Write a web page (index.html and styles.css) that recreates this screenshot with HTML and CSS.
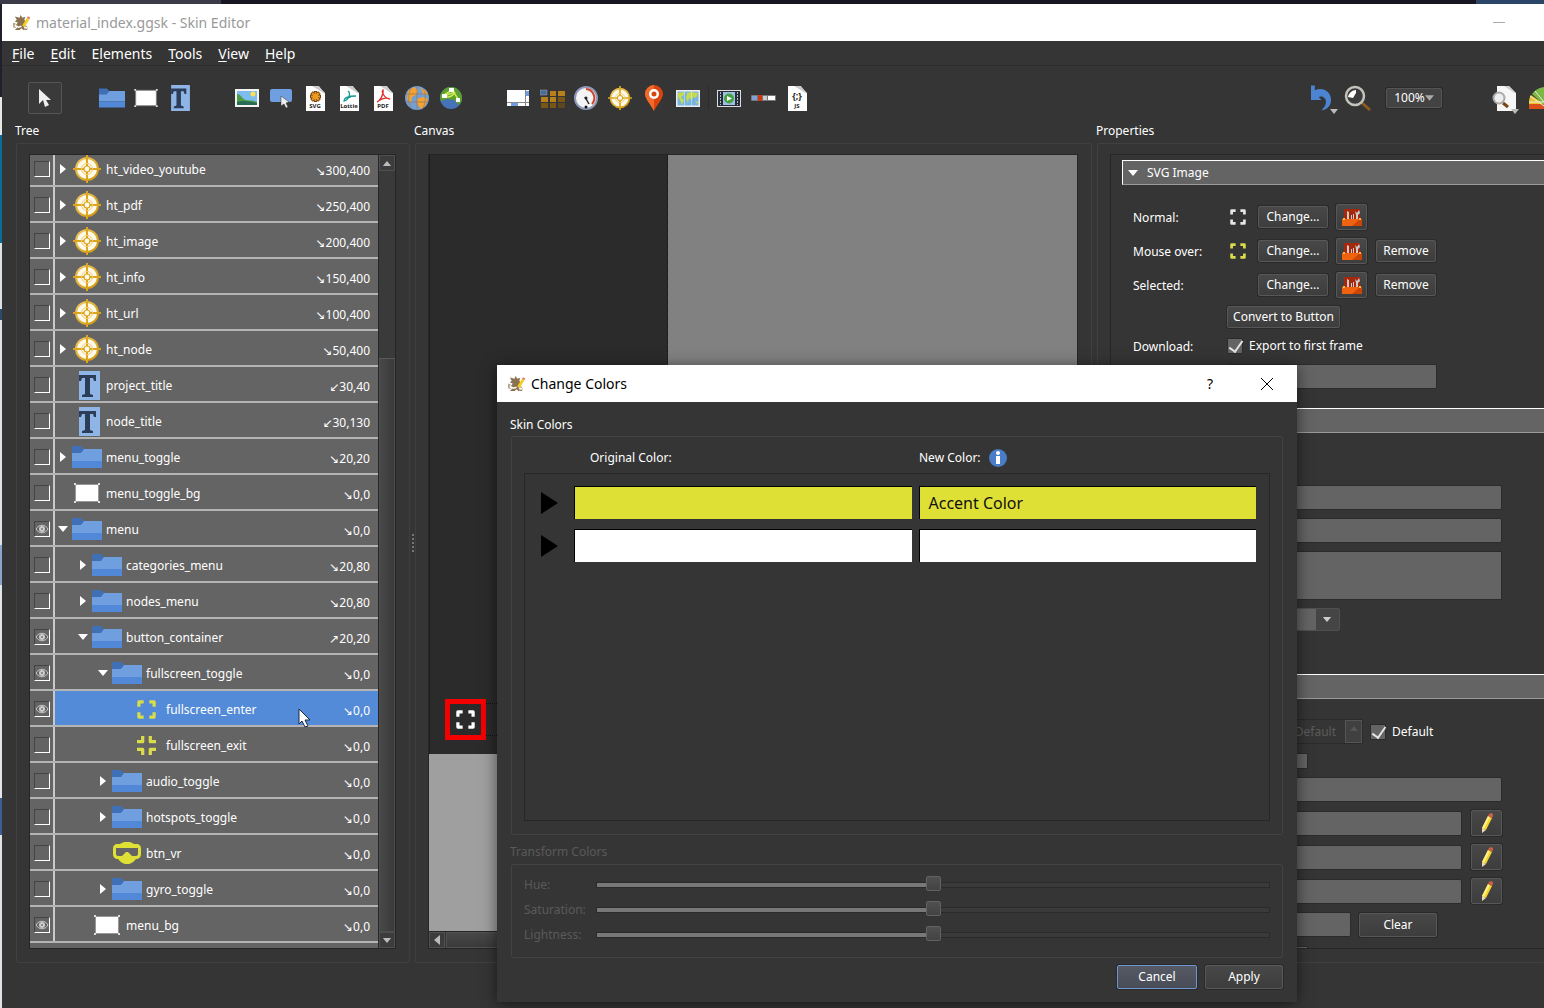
FILE: index.html
```html
<!DOCTYPE html>
<html lang="en">
<head>
<meta charset="utf-8">
<title>material_index.ggsk - Skin Editor</title>
<link rel="stylesheet" href="styles.css">
</head>
<body>
<svg class="defs" aria-hidden="true">
  <defs>
    <linearGradient id="gold" x1="0" y1="0" x2="1" y2="1"><stop offset="0" stop-color="#ecc660"/><stop offset="1" stop-color="#cf9708"/></linearGradient>
    <symbol id="i-logo" viewBox="0 0 20 18"><path fill="#8a7150" d="M4 3l4 1 1-3 2 3 3-1-1 3 2 3-2 3 1 3 2 1v1h-4l-2-2-2 2H3l3-3-2-2 2-3-3-1 2-2-2-3z"/><path fill="#b9a98c" d="M1 9l3 1-1 3 2 2-4-1zM12 13l3-1 2 3-4 2z"/><path stroke="#fff" stroke-width="1.500" fill="none" d="M3 12l4 2 3-1M13 14l3 1"/><path stroke="#f3cf1c" stroke-width="3" d="M17 5l-5 8"/><path stroke="#e08060" stroke-width="3" d="M18 3l-1 2"/></symbol>
    <symbol id="i-pointer" viewBox="0 0 14 20"><path fill="#eee" d="M1 1v15l4-4 2 7 4-2-3-5h5z"/></symbol>
    <symbol id="i-folder" viewBox="0 0 30 22"><path fill="#3f6fb5" d="M0 0h9l3 3v5H0z"/><path fill="#709fdf" d="M0 7h9l3-4h18v12H0z"/><path fill="#5189d8" d="M0 15h30v7H0z"/></symbol>
    <symbol id="i-rect" viewBox="0 0 26 20"><path fill="none" stroke="#999" d="M1.500 1.500h23v17h-23z"/><path fill="#fff" d="M2 2h22v16H2z"/><path fill="#ddd" d="M0 0h2v2H0zM24 0h2v2h-2zM0 18h2v2H0zM24 18h2v2h-2z"/></symbol>
    <symbol id="i-text" viewBox="0 0 21 29"><path fill="#8fb4e6" d="M0 0h21v29H0z"/><path fill="#2b3d59" d="M0 4h17v6h-2l-1-3h-3v16l3 1v2H3v-2l3-1V7H3l-1 3H0z"/></symbol>
    <symbol id="i-image" viewBox="0 0 24 18"><path fill="#f3f3f3" d="M0 0h24v18H0z"/><path fill="#7dbdee" d="M2 2h20v14H2z"/><circle cx="18" cy="5" r="2.500" fill="#ffe34a"/><path fill="#4f9b45" d="M2 5c4 0 5 5 9 6s7 0 11 2v3H2z"/><path fill="#286a55" d="M2 13c6-2 12-1 20 1v2H2z"/></symbol>
    <symbol id="i-button" viewBox="0 0 22 20"><rect width="22" height="13" rx="2" y="1" fill="#6f9fe0"/><path fill="#eee" stroke="#333" stroke-width=".5" d="M11 8v10l3-2 2 4 2-1-2-4 3-1z"/></symbol>
    <symbol id="i-page" viewBox="0 0 19 25"><path fill="#fff" d="M0 0h12l7 7v18H0z"/><path fill="#ccc" d="M6 0h7l6 8z"/></symbol>
    <symbol id="i-svg" viewBox="0 0 19 25"><use href="#i-page"/><g stroke="#704010" stroke-width="3.400"><path d="M9.500 5v11M4 10.500h11M5.500 6.500l8 8M13.500 6.500l-8 8"/></g><g stroke="#e99b25" stroke-width="1.800"><path d="M9.500 6v9M5 10.500h9M6 7l7 7M13 7l-7 7"/></g></symbol>
    <symbol id="i-lottie" viewBox="0 0 19 25"><use href="#i-page"/><path fill="none" stroke="#159b93" stroke-width="1.300" d="M8 5c3 2 1 9-4 10 0-4 6-5 12-5M5 12l6-1"/></symbol>
    <symbol id="i-pdf" viewBox="0 0 19 25"><use href="#i-page"/><path fill="none" stroke="#e02e26" stroke-width="1.300" d="M3 16c3-1 7-8 6-12-2 2 2 9 7 9-4-2-9 0-13 3z"/></symbol>
    <symbol id="i-globe" viewBox="0 0 24 24"><circle cx="12" cy="12" r="12" fill="#739fd2"/><path fill="#f4a233" d="M3 5l6-4 4 3-2 5-4 2-1 6-4-4zM12 13l6-2 5 2-3 7-4 3-4-5zM16 2l5 3 2 4-5-1z"/><path fill="none" stroke="#93785c" stroke-width=".7" d="M1 8h22M1 16h22M12 0v24M6 2c-3 6-3 14 0 20M18 2c3 6 3 14 0 20"/></symbol>
    <symbol id="i-maps" viewBox="0 0 22 22"><circle cx="11" cy="11" r="11" fill="#4672b8"/><path fill="#5ba02e" d="M0 11a11 11 0 0 1 22 0c0 3-1 5-3 7l-5-5-7-1-6 2z"/><path fill="none" stroke="#cdea54" stroke-width="1.500" d="M4 8l8-5M4 9l11-4M13 4l5 8M4 9c4 2 8 1 11-4"/><path fill="#fff" d="M2 7h5v4H2zM9 1h5v4H9zM16 11h4v4h-4z"/></symbol>
    <symbol id="i-container" viewBox="0 0 22 16"><path fill="#fff" d="M0 0h22v16H0z"/><path fill="none" stroke="#888" d="M0 12.500h22M18.500 0v16"/><path fill="#6f9fe0" d="M4 13h7v3H4zM19 1h3v5h-3z"/></symbol>
    <symbol id="i-grid" viewBox="0 0 25 19"><path fill="#b7801b" d="M10 2h6v5h-6zM18 2h7v5h-7zM1 8h7v5H1zM10 8h6v5h-6z"/><path fill="#795618" d="M18 8h7v5h-7zM1 14h7v5H1zM10 14h6v5h-6z"/><path fill="#5e4720" d="M18 14h7v5h-7z"/><path fill="#4a6c9b" stroke="#aaa" stroke-width=".5" d="M0 1h7v5H0z"/></symbol>
    <symbol id="i-gauge" viewBox="0 0 24 24"><circle cx="12" cy="12" r="11" fill="#f4f4f4" stroke="#8d99b7" stroke-width="2"/><path fill="none" stroke="#d1442b" stroke-width="2" d="M12 3a9 9 0 0 1 6 15"/><path stroke="#222" stroke-width="1.500" d="M11 11l4 7"/><circle cx="12" cy="12" r="1.500" fill="#222"/><circle cx="12" cy="21" r="1.500" fill="#111"/></symbol>
    <symbol id="i-target" viewBox="0 0 28 28"><circle cx="14" cy="14" r="11" fill="#fff9ea" stroke="url(#gold)" stroke-width="2"/><path d="M13 0h2v11h-2zM13 17h2v11h-2zM0 13h11v2H0zM17 13h11v2H17z" fill="#dba51c"/><circle cx="14" cy="14" r="5.500" fill="none" stroke="#edcb70"/><circle cx="14" cy="14" r="3" fill="#fffaf0" stroke="#dba51c" stroke-width="1.200"/></symbol>
    <symbol id="i-pin" viewBox="0 0 18 26"><path fill="#d9440e" d="M9 0a9 9 0 0 1 9 9c0 5-7 12-9 17C7 21 0 14 0 9a9 9 0 0 1 9-9z"/><path fill="#f06a2b" d="M9 0v26C7 21 0 14 0 9a9 9 0 0 1 9-9z"/><circle cx="9" cy="9" r="5" fill="#fff"/><circle cx="9" cy="9" r="2.500" fill="#d9440e"/></symbol>
    <symbol id="i-map" viewBox="0 0 24 17"><path fill="#eee" d="M0 0h24v17H0z"/><path fill="#76b4e4" d="M1.500 1.500h21v14h-21z"/><path fill="#c7d94d" d="M2 3l7-1-2 4-2 1 3 3-2 5-2-5-2-3zM11 3l4-1 7 1-2 5-3-1-1 3-3-2-1 5-2-5zM19 11l3 1-1 2z"/><path stroke="#dff0ff" stroke-width=".5" d="M8.500 1v15M15.500 1v15"/></symbol>
    <symbol id="i-film" viewBox="0 0 24 17"><path fill="#ddd" d="M0 0h24v17H0z"/><path fill="#252d3d" d="M1 1h22v15H1z"/><path fill="#9ec0e2" d="M6 2h12v13H6z"/><path stroke="#bbb" stroke-width="1" stroke-dasharray="2 1" d="M3.500 2v13M20.500 2v13"/><circle cx="12" cy="8.500" r="5" fill="#47a044"/><path fill="#fff" d="M10 6l5 2.500-5 2.500z"/></symbol>
    <symbol id="i-seek" viewBox="0 0 25 6"><rect width="25" height="6" rx="1" fill="#777"/><path fill="#7da2d8" d="M1 1h5v4H1z"/><path fill="#ccc" d="M12 1h4v4h-4z"/><path fill="#fff" d="M17 1h7v4h-7z"/><path fill="#cc3711" d="M7 0h4v6H7z"/></symbol>
    <symbol id="i-undo" viewBox="0 0 22 26"><path fill="#4d84d1" d="M0 0h4v5c8-4 17 1 17 10 0 6-4 10-10 11 5-5 6-10 3-13-2-2-4-2-6-1l3 3-11 0z"/></symbol>
    <symbol id="i-zoom" viewBox="0 0 27 27"><path stroke="#8c5b1e" stroke-width="3" d="M17 17l9 8"/><circle cx="11" cy="11" r="9" fill="#3b3b3b" stroke="#c5c3bb" stroke-width="2.500"/><path fill="#fff" d="M12 5c-4 0-7 3-8 7l5 1 3-5z"/></symbol>
    <symbol id="i-preview" viewBox="0 0 24 25"><path fill="#f7f7f7" d="M5 0h12l7 7v18H5z"/><path fill="#ccc" d="M12 0h5l7 8z"/><path stroke="#794418" stroke-width="3" d="M11 17l5 4"/><circle cx="7" cy="12" r="5.500" fill="#eee" stroke="#aaa" stroke-width="2"/></symbol>
    <symbol id="i-palette" viewBox="0 0 15 22"><path fill="#d9501a" d="M0 15h15v7H0z"/><path fill="#edc42d" d="M2 8l13 9H0c0-3 0-6 2-9z"/><path fill="#7bb944" d="M3 7c2-3 6-6 12-7v18z"/><path fill="none" stroke="#e8efe0" d="M1 9l14 10M6 4l9 11M0 15h15"/></symbol>
    <symbol id="i-fs" viewBox="0 0 20 20"><path fill="none" stroke="currentColor" stroke-width="3.400" stroke-linejoin="round" d="M2 7V2h5M13 2h5v5M18 13v5h-5M7 18H2v-5"/></symbol>
    <symbol id="i-fsx" viewBox="0 0 20 20"><path fill="none" stroke="currentColor" stroke-width="3.400" stroke-linejoin="round" d="M0 6h6V0M14 0v6h6M20 14h-6v6M6 20v-6H0"/></symbol>
    <symbol id="i-vr" viewBox="0 0 28 22"><path fill="#dfe036" fill-rule="evenodd" d="M7 2c4-3 10-3 14 0h3c2 0 4 2 4 4v6c0 3-2 5-5 5-5 7-13 7-18 0-3 0-5-2-5-5V6c0-2 2-4 4-4zM3 6v6c0 1 1 2 2 2h4l4-4h2l4 4h4c1 0 2-1 2-2V6z"/></symbol>
    <symbol id="i-tools" viewBox="0 0 20 17"><path fill="#a3280c" d="M2 0h16v13H2z"/><path fill="#ccc" d="M5 2l2 1v7H5zM9 6h1v4H9zM11 5h1v5h-1zM13 2l2 2 2-3 1 3-2 2v4h-2V6z"/><path fill="#ef6210" d="M0 10h20v7H0z"/><path fill="#c94608" d="M10 17l8-7h2v7z"/><path fill="#ffb648" d="M1 9h2v2H1zM17 9h2v2h-2z"/></symbol>
    <symbol id="i-pencil" viewBox="0 0 12 20"><path fill="#f5d327" d="M7 3l4 2-6 12-4-2z"/><path fill="#fff08a" d="M7 3l2 1-6 12-2-1z"/><path fill="#c76245" d="M8 1l2-1 2 1v2l-1 2-4-2z"/><path fill="#ecdab7" d="M1 15l4 2-4 3z"/></symbol>
    <symbol id="i-eye" viewBox="0 0 14 12"><path fill="none" stroke="#ccc" d="M1 6c3-5 9-5 12 0-3 5-9 5-12 0z"/><circle cx="7" cy="6" r="3" fill="#ccc"/><circle cx="7" cy="6" r="1" fill="#777"/></symbol>
    <symbol id="i-right" viewBox="0 0 6 10"><path fill="currentColor" d="M0 0l6 5-6 5z"/></symbol>
    <symbol id="i-down" viewBox="0 0 10 6"><path fill="currentColor" d="M0 0h10L5 6z"/></symbol>
  </defs>
</svg>

<main class="window">
  <header class="titlebar"><svg class="logo"><use href="#i-logo"/></svg><h1>material_index.ggsk - Skin Editor</h1><button class="minimize" aria-label="Minimize"></button></header>
  <nav class="menubar">
    <a href="#file"><u>F</u>ile</a><a href="#edit"><u>E</u>dit</a><a href="#elements">E<u>l</u>ements</a><a href="#tools"><u>T</u>ools</a><a href="#view"><u>V</u>iew</a><a href="#help"><u>H</u>elp</a>
  </nav>
  <div class="toolbar">
    <div class="tools"><button class="tool active" aria-label="Select"><svg width="14" height="20"><use href="#i-pointer"/></svg></button></div>
    <div class="tools">
      <button class="tool" aria-label="Container"><svg width="26" height="20"><use href="#i-folder"/></svg></button>
      <button class="tool" aria-label="Rectangle"><svg width="24" height="18"><use href="#i-rect"/></svg></button>
      <button class="tool" aria-label="Text"><svg width="19" height="26"><use href="#i-text"/></svg></button>
    </div>
    <div class="tools">
      <button class="tool" aria-label="Image"><svg width="24" height="18"><use href="#i-image"/></svg></button>
      <button class="tool" aria-label="Button"><svg width="22" height="20"><use href="#i-button"/></svg></button>
      <button class="tool doc"><svg width="19" height="25"><use href="#i-svg"/></svg><small>SVG</small></button>
      <button class="tool doc"><svg width="19" height="25"><use href="#i-lottie"/></svg><small>Lottie</small></button>
      <button class="tool doc"><svg width="19" height="25"><use href="#i-pdf"/></svg><small>PDF</small></button>
      <button class="tool" aria-label="External"><svg width="24" height="24"><use href="#i-globe"/></svg></button>
      <button class="tool" aria-label="Map"><svg width="22" height="22"><use href="#i-maps"/></svg></button>
    </div>
    <div class="tools">
      <button class="tool" aria-label="Scroll area"><svg width="22" height="16"><use href="#i-container"/></svg></button>
      <button class="tool" aria-label="Cloner"><svg width="25" height="19"><use href="#i-grid"/></svg></button>
      <button class="tool" aria-label="Timer"><svg width="24" height="24"><use href="#i-gauge"/></svg></button>
      <button class="tool" aria-label="Hotspot"><svg width="24" height="24"><use href="#i-target"/></svg></button>
      <button class="tool" aria-label="Marker"><svg width="18" height="26"><use href="#i-pin"/></svg></button>
      <button class="tool" aria-label="Map area"><svg width="24" height="17"><use href="#i-map"/></svg></button>
      <span class="divider"></span>
      <button class="tool" aria-label="Video"><svg width="24" height="17"><use href="#i-film"/></svg></button>
      <button class="tool" aria-label="Seekbar"><svg width="25" height="6"><use href="#i-seek"/></svg></button>
      <button class="tool doc"><svg width="19" height="25"><use href="#i-page"/></svg><em>{;}</em><small>JS</small></button>
    </div>
    <div class="tools end">
      <button class="tool drop" aria-label="Undo"><svg width="21" height="26"><use href="#i-undo"/></svg><svg class="more" width="8" height="5"><use href="#i-down"/></svg></button>
      <button class="tool" aria-label="Zoom"><svg width="27" height="27"><use href="#i-zoom"/></svg></button>
      <button class="percent">100%<svg width="9" height="6"><use href="#i-down"/></svg></button>
      <button class="tool drop" aria-label="Preview"><svg width="24" height="25"><use href="#i-preview"/></svg><svg class="more" width="8" height="5"><use href="#i-down"/></svg></button>
      <button class="palette" aria-label="Colors"><svg width="15" height="22"><use href="#i-palette"/></svg></button>
    </div>
  </div>

  <div class="panes">
    <section class="pane tree-pane">
      <h2>Tree</h2>
      <div class="frame">
        <div class="tree">
          <ul>
            <li class="l0"><label class="eye"><input type="checkbox" aria-label="Show ht_video_youtube"></label><div class="cell"><svg class="right"><use href="#i-right"/></svg><svg class="target"><use href="#i-target"/></svg><span>ht_video_youtube</span><span class="pos"><b>↘</b>300,400</span></div></li>
            <li class="l0"><label class="eye"><input type="checkbox" aria-label="Show ht_pdf"></label><div class="cell"><svg class="right"><use href="#i-right"/></svg><svg class="target"><use href="#i-target"/></svg><span>ht_pdf</span><span class="pos"><b>↘</b>250,400</span></div></li>
            <li class="l0"><label class="eye"><input type="checkbox" aria-label="Show ht_image"></label><div class="cell"><svg class="right"><use href="#i-right"/></svg><svg class="target"><use href="#i-target"/></svg><span>ht_image</span><span class="pos"><b>↘</b>200,400</span></div></li>
            <li class="l0"><label class="eye"><input type="checkbox" aria-label="Show ht_info"></label><div class="cell"><svg class="right"><use href="#i-right"/></svg><svg class="target"><use href="#i-target"/></svg><span>ht_info</span><span class="pos"><b>↘</b>150,400</span></div></li>
            <li class="l0"><label class="eye"><input type="checkbox" aria-label="Show ht_url"></label><div class="cell"><svg class="right"><use href="#i-right"/></svg><svg class="target"><use href="#i-target"/></svg><span>ht_url</span><span class="pos"><b>↘</b>100,400</span></div></li>
            <li class="l0"><label class="eye"><input type="checkbox" aria-label="Show ht_node"></label><div class="cell"><svg class="right"><use href="#i-right"/></svg><svg class="target"><use href="#i-target"/></svg><span>ht_node</span><span class="pos"><b>↘</b>50,400</span></div></li>
            <li class="l0"><label class="eye"><input type="checkbox" aria-label="Show project_title"></label><div class="cell"><i></i><svg class="text"><use href="#i-text"/></svg><span>project_title</span><span class="pos"><b>↙</b>30,40</span></div></li>
            <li class="l0"><label class="eye"><input type="checkbox" aria-label="Show node_title"></label><div class="cell"><i></i><svg class="text"><use href="#i-text"/></svg><span>node_title</span><span class="pos"><b>↙</b>30,130</span></div></li>
            <li class="l0"><label class="eye"><input type="checkbox" aria-label="Show menu_toggle"></label><div class="cell"><svg class="right"><use href="#i-right"/></svg><svg class="folder"><use href="#i-folder"/></svg><span>menu_toggle</span><span class="pos"><b>↘</b>20,20</span></div></li>
            <li class="l0"><label class="eye"><input type="checkbox" aria-label="Show menu_toggle_bg"></label><div class="cell"><i></i><svg class="rect"><use href="#i-rect"/></svg><span>menu_toggle_bg</span><span class="pos"><b>↘</b>0,0</span></div></li>
            <li class="l0"><label class="eye"><input type="checkbox" checked aria-label="Show menu"><svg><use href="#i-eye"/></svg></label><div class="cell"><svg class="down"><use href="#i-down"/></svg><svg class="folder"><use href="#i-folder"/></svg><span>menu</span><span class="pos"><b>↘</b>0,0</span></div></li>
            <li class="l1"><label class="eye"><input type="checkbox" aria-label="Show categories_menu"></label><div class="cell"><svg class="right"><use href="#i-right"/></svg><svg class="folder"><use href="#i-folder"/></svg><span>categories_menu</span><span class="pos"><b>↘</b>20,80</span></div></li>
            <li class="l1"><label class="eye"><input type="checkbox" aria-label="Show nodes_menu"></label><div class="cell"><svg class="right"><use href="#i-right"/></svg><svg class="folder"><use href="#i-folder"/></svg><span>nodes_menu</span><span class="pos"><b>↘</b>20,80</span></div></li>
            <li class="l1"><label class="eye"><input type="checkbox" checked aria-label="Show button_container"><svg><use href="#i-eye"/></svg></label><div class="cell"><svg class="down"><use href="#i-down"/></svg><svg class="folder"><use href="#i-folder"/></svg><span>button_container</span><span class="pos"><b>↗</b>20,20</span></div></li>
            <li class="l2"><label class="eye"><input type="checkbox" checked aria-label="Show fullscreen_toggle"><svg><use href="#i-eye"/></svg></label><div class="cell"><svg class="down"><use href="#i-down"/></svg><svg class="folder"><use href="#i-folder"/></svg><span>fullscreen_toggle</span><span class="pos"><b>↘</b>0,0</span></div></li>
            <li class="l3 selected"><label class="eye"><input type="checkbox" checked aria-label="Show fullscreen_enter"><svg><use href="#i-eye"/></svg></label><div class="cell"><i></i><svg class="fs"><use href="#i-fs"/></svg><span>fullscreen_enter</span><span class="pos"><b>↘</b>0,0</span></div></li>
            <li class="l3"><label class="eye"><input type="checkbox" aria-label="Show fullscreen_exit"></label><div class="cell"><i></i><svg class="fs"><use href="#i-fsx"/></svg><span>fullscreen_exit</span><span class="pos"><b>↘</b>0,0</span></div></li>
            <li class="l2"><label class="eye"><input type="checkbox" aria-label="Show audio_toggle"></label><div class="cell"><svg class="right"><use href="#i-right"/></svg><svg class="folder"><use href="#i-folder"/></svg><span>audio_toggle</span><span class="pos"><b>↘</b>0,0</span></div></li>
            <li class="l2"><label class="eye"><input type="checkbox" aria-label="Show hotspots_toggle"></label><div class="cell"><svg class="right"><use href="#i-right"/></svg><svg class="folder"><use href="#i-folder"/></svg><span>hotspots_toggle</span><span class="pos"><b>↘</b>0,0</span></div></li>
            <li class="l2"><label class="eye"><input type="checkbox" aria-label="Show btn_vr"></label><div class="cell"><i></i><svg class="vr"><use href="#i-vr"/></svg><span>btn_vr</span><span class="pos"><b>↘</b>0,0</span></div></li>
            <li class="l2"><label class="eye"><input type="checkbox" aria-label="Show gyro_toggle"></label><div class="cell"><svg class="right"><use href="#i-right"/></svg><svg class="folder"><use href="#i-folder"/></svg><span>gyro_toggle</span><span class="pos"><b>↘</b>0,0</span></div></li>
            <li class="l1"><label class="eye"><input type="checkbox" checked aria-label="Show menu_bg"><svg><use href="#i-eye"/></svg></label><div class="cell"><i></i><svg class="rect"><use href="#i-rect"/></svg><span>menu_bg</span><span class="pos"><b>↘</b>0,0</span></div></li>
          </ul>
          <div class="scroll-y"><button aria-label="Scroll up"><svg class="flip" width="10" height="5"><use href="#i-down"/></svg></button><span class="track"></span><span class="thumb"></span><button aria-label="Scroll down"><svg width="10" height="5"><use href="#i-down"/></svg></button></div>
        </div>
      </div>
      <span class="grip"></span>
    </section>

    <section class="pane canvas-pane">
      <h2>Canvas</h2>
      <div class="frame">
        <div class="canvas">
          <div class="view">
            <div class="skin"></div>
            <div class="bounds"></div>
            <div class="marker"><svg width="19" height="19"><use href="#i-fs"/></svg></div>
          </div>
          <div class="scroll-x"><button aria-label="Scroll left"><svg class="flip" width="6" height="10"><use href="#i-right"/></svg></button><span class="thumb"></span></div>
        </div>
      </div>
    </section>

    <section class="pane props-pane">
      <h2>Properties</h2>
      <div class="frame">
        <div class="props">
          <h3><svg width="10" height="6"><use href="#i-down"/></svg>SVG Image</h3>
          <div class="form">
            <div class="field tall"><span class="label">Normal:</span><svg class="state"><use href="#i-fs"/></svg><button class="btn change">Change...</button><button class="btn square" aria-label="Edit colors"><svg width="20" height="17"><use href="#i-tools"/></svg></button></div>
            <div class="field tall"><span class="label">Mouse over:</span><svg class="state yellow"><use href="#i-fs"/></svg><button class="btn change">Change...</button><button class="btn square" aria-label="Edit colors"><svg width="20" height="17"><use href="#i-tools"/></svg></button><button class="btn remove">Remove</button></div>
            <div class="field tall"><span class="label">Selected:</span><span class="state"></span><button class="btn change">Change...</button><button class="btn square" aria-label="Edit colors"><svg width="20" height="17"><use href="#i-tools"/></svg></button><button class="btn remove">Remove</button></div>
            <div class="field"><span class="label"></span><button class="btn convert">Convert to Button</button></div>
            <div class="field low"><span class="label">Download:</span><input class="check" type="checkbox" id="export" checked><label for="export">Export to first frame</label></div>
            <div class="field"><span class="label"></span><input class="box w-s" type="text" aria-label="Value"></div>
          </div>
          <h3></h3>
          <div class="form second">
            <div class="field"><span class="label"></span><input class="box w-l" type="text" aria-label="Identifier"></div>
            <div class="field"><span class="label"></span><input class="box w-l" type="text" aria-label="Class"></div>
            <div class="field"><span class="label"></span><textarea class="box w-l" aria-label="Comment"></textarea></div>
            <div class="field"><span class="label"></span><span class="combo"><select aria-label="Type"><option></option></select><svg width="10" height="5"><use href="#i-down"/></svg></span></div>
          </div>
          <h3></h3>
          <div class="form third">
            <div class="field"><span class="label"></span><span class="spin"><input type="text" value="Default" disabled aria-label="Number"><i><svg class="flip" width="10" height="5"><use href="#i-down"/></svg></i></span><input class="check" type="checkbox" id="default" checked><label for="default">Default</label></div>
            <div class="field mini"><span class="label"></span><input class="check far" type="checkbox" aria-label="Enabled"></div>
            <div class="field"><span class="label"></span><input class="box w-l" type="text" aria-label="Title"></div>
            <div class="field tall"><span class="label"></span><input class="box w-m" type="text" aria-label="Tooltip"><button class="btn square edit" aria-label="Edit"><svg width="12" height="20"><use href="#i-pencil"/></svg></button></div>
            <div class="field tall"><span class="label"></span><input class="box w-m" type="text" aria-label="Link"><button class="btn square edit" aria-label="Edit"><svg width="12" height="20"><use href="#i-pencil"/></svg></button></div>
            <div class="field tall"><span class="label"></span><input class="box w-m" type="text" aria-label="Target"><button class="btn square edit" aria-label="Edit"><svg width="12" height="20"><use href="#i-pencil"/></svg></button></div>
            <div class="field"><span class="label"></span><input class="box w-xs" type="text" aria-label="Shortcut"><button class="btn action clear">Clear</button></div>
            <div class="field mini"><span class="label"></span><input class="check far" type="checkbox" aria-label="Locked"></div>
          </div>
        </div>
      </div>
    </section>
  </div>
</main>

<div class="dialog" role="dialog" aria-labelledby="dialog-title">
  <header class="titlebar"><svg class="logo"><use href="#i-logo"/></svg><h1 id="dialog-title">Change Colors</h1><button class="help">?</button><button class="close" aria-label="Close"><svg width="12" height="12" viewBox="0 0 12 12"><path stroke="#000" d="M0 0l12 12M12 0L0 12"/></svg></button></header>
  <div class="dialog-body">
    <h2>Skin Colors</h2>
    <div class="group colors">
      <div class="heads"><span>Original Color:</span><span>New Color:<svg width="18" height="18" viewBox="0 0 18 18"><circle cx="9" cy="9" r="9" fill="#4a7dc8"/><circle cx="9" cy="4" r="2" fill="#fff"/><path fill="#fff" d="M7 7h4v8H7z"/></svg></span></div>
      <div class="list">
        <div class="color"><svg width="17" height="22" viewBox="0 0 17 22"><path d="M0 0l17 11L0 22z"/></svg><button class="swatch accent" aria-label="Original color 1"></button><button class="swatch accent">Accent Color</button></div>
        <div class="color"><svg width="17" height="22" viewBox="0 0 17 22"><path d="M0 0l17 11L0 22z"/></svg><button class="swatch" aria-label="Original color 2"></button><button class="swatch" aria-label="New color 2"></button></div>
      </div>
    </div>
    <h2 class="off">Transform Colors</h2>
    <div class="group sliders">
      <label for="hue">Hue:</label><input type="range" id="hue" disabled>
      <label for="sat">Saturation:</label><input type="range" id="sat" disabled>
      <label for="light">Lightness:</label><input type="range" id="light" disabled>
    </div>
    <div class="actions"><button class="btn action primary">Cancel</button><button class="btn action">Apply</button></div>
  </div>
</div>

<svg class="cursor" viewBox="0 0 13 20"><path fill="#fff" stroke="#1c2840" d="M1 1v15l3-3 3 6 3-1-3-6h5z"/></svg>
</body>
</html>
```

FILE: styles.css
```css
* { box-sizing: border-box; }

body {
  margin: 0;
  height: 100vh;
  padding: 4px 0 0 2px;
  display: flex;
  overflow: hidden;
  position: relative;
  color: #fff;
  font: 12px/18px "Noto Sans", sans-serif;
  background:
    linear-gradient(90deg, #3b3a49 0 221px, #161521 221px 1476px, #2b4568 1476px) 0 0 / 100% 4px no-repeat,
    linear-gradient(#20202c 0 97px, #e8e8e8 97px 135px, #0a6c98 135px 243px, #dce2e6 243px 309px, #2a4b70 309px 320px, #dfe3e7 320px 545px, #8ba6ce 545px 585px, #e2e5e9 585px 798px, #3b5e94 798px 835px, #dfe3e7 835px);
}

h1, h2, h3, ul { margin: 0; padding: 0; font: inherit; list-style: none; }
button, input, select, textarea { font: inherit; color: inherit; margin: 0; padding: 0; border: 0; background: none; border-radius: 0; }
svg { display: block; flex: none; }
.defs { position: absolute; width: 0; height: 0; }
.flip { transform: rotate(180deg); }

.window { flex: 1; min-width: 0; min-height: 0; display: flex; flex-direction: column; background: #353535; }

.titlebar { flex: none; display: flex; align-items: center; height: 37px; padding-left: 10px; background: #fff; color: #999; font-size: 14px; }
.titlebar h1 { margin-left: 5px; flex: 1; }
.logo { width: 19px; height: 17px; }
.minimize { width: 12px; height: 1px; margin-right: 39px; background: #aaa; }

.menubar { flex: none; display: flex; gap: 16px; height: 25px; padding: 3px 0 0 10px; border-bottom: 1px solid #2d2d2d; font-size: 14px; line-height: 20px; }
.menubar a { color: #fff; text-decoration: none; }
.menubar u { text-underline-offset: 2px; }

.toolbar { flex: none; display: flex; align-items: center; gap: 33px; height: 56px; padding: 8px 0 0 26px; }
.tools { display: flex; align-items: center; }
.tool { width: 34px; height: 32px; display: grid; place-items: center; }
.tool > * { grid-area: 1 / 1; }
.tool.active { border: 1px solid #555; border-radius: 2px; background: #3a3a3a; }
.doc small, .doc em { color: #222; font: bold 6px/8px "Open Sans", sans-serif; align-self: end; margin-bottom: 4px; }
.doc em { font-size: 9px; line-height: 12px; margin-bottom: 12px; }
.divider { width: 1px; height: 24px; margin: 0 3px; background: #2d2d2d; }
.end { margin-left: auto; color: #bbb; }
.drop { position: relative; justify-content: start; padding-left: 5px; }
.drop .more { position: absolute; right: 2px; bottom: 0; }
.percent { display: flex; align-items: center; justify-content: center; width: 56px; height: 20px; margin: 0 45px 0 12px; border: 1px solid #555; border-radius: 2px; background: #434343; color: #fff; box-shadow: 0 0 0 1px #2a2a2a; }
.percent svg { color: #aaa; }
.palette { margin-left: 8px; }

.panes { flex: 1; min-height: 0; display: flex; gap: 5px; padding: 0 0 45px 14px; }
.pane { display: flex; flex-direction: column; min-height: 0; position: relative; }
.pane h2, .dialog-body h2 { flex: none; margin-left: -1px; height: 21px; line-height: 18px; }
.frame { flex: 1; min-height: 0; display: flex; padding: 10px 13px 13px 12px; border: 1px solid #404040; border-radius: 2px; }
.tree-pane { width: 394px; flex: none; }
.canvas-pane { flex: 1; min-width: 0; }
.props-pane { width: 447px; flex: none; }

.tree { flex: 1; display: flex; overflow: hidden; border: 1px solid #262626; background: #646464; }
.tree ul { flex: 1; margin-top: -4px; }
.tree li { display: flex; height: 36px; border-bottom: 2px solid #b4b4b4; }
.eye { width: 25px; padding: 1px 0 0 4px; display: grid; align-content: center; justify-items: start; border-right: 2px solid #c9c9c9; }
.eye > * { grid-area: 1 / 1; }
.eye input { appearance: none; width: 16px; height: 16px; border: 1px solid #444; border-right-color: #fff; border-bottom-color: #fff; }
.eye svg { width: 14px; height: 12px; margin: 2px 0 0 1px; }
.cell { flex: 1; display: flex; align-items: center; padding: 2px 8px 0 0; }
.cell span { padding-top: 2px; }
.cell i { width: 17px; }
.cell .right { width: 6px; height: 10px; margin: 0 6px 0 5px; }
.cell .down { width: 10px; height: 6px; margin: 0 4px 0 3px; }
.cell .target { width: 28px; height: 28px; margin: 0 5px 0 1px; }
.cell .text { width: 21px; height: 29px; margin: 0 6px 0 7px; }
.cell .folder { width: 30px; height: 22px; margin-right: 4px; }
.cell .rect { width: 26px; height: 20px; margin: 0 6px 0 2px; }
.cell .fs { width: 19px; height: 19px; margin: 0 10px 0 5px; color: #dbdc4a; }
.cell .vr { width: 28px; height: 22px; margin: 0 5px 0 1px; }
.l1 .cell { padding-left: 20px; }
.l2 .cell { padding-left: 40px; }
.l3 .cell { padding-left: 60px; }
.selected .cell { background: #538bd8; }
.cell .pos { margin-left: auto; padding-top: 4px; }
.pos b { font: 12px/10px "DejaVu Sans", sans-serif; }

.scroll-y { width: 17px; display: flex; flex-direction: column; border-left: 1px solid #262626; background: #3a3a3a; color: #bbb; }
.scroll-y button, .scroll-x button { flex: none; width: 16px; height: 16px; display: grid; place-items: center; border: 1px solid #505050; background: #3c3c3c; }
.scroll-y .track { flex: 187; }
.scroll-y .thumb { flex: 573; border: 1px solid #4d4d4d; border-top-color: #5a5a5a; background: linear-gradient(90deg, #484848, #3a3a3a); }
.grip { position: absolute; right: -4px; top: 412px; height: 18px; border-left: 2px dotted #777; }

.canvas { flex: 1; display: flex; flex-direction: column; border: 1px solid #262626; }
.view { flex: 1; position: relative; overflow: hidden; background: linear-gradient(#818181 0 400px, #9f9f9f 600px); }
.skin { position: absolute; left: 0; top: 0; width: 239px; height: 599px; background: #2b2b2b; border: 1px dotted #111; border-top: 0; border-bottom: 0; }
.bounds { position: absolute; left: 16px; top: 548px; width: 200px; height: 33px; border: 1px dotted #111; }
.marker { position: absolute; left: 16px; top: 544px; width: 41px; height: 41px; display: grid; place-items: center; border: 5px solid #f40000; background: #2b2b2b; }
.scroll-x { height: 17px; display: flex; border-top: 1px solid #262626; color: #bbb; }
.scroll-x .thumb { flex: 1; margin-left: 1px; border: 1px solid #505050; background: linear-gradient(#484848, #3a3a3a); }

.props-pane .frame { border-right: 0; padding-right: 0; }
.props { flex: 1; min-width: 0; display: flex; flex-direction: column; overflow: hidden; border: 1px solid #262626; border-right: 0; padding: 5px 0 0 11px; }
.props h3 { flex: none; display: flex; align-items: center; gap: 9px; height: 25px; padding: 1px 0 0 5px; border: 1px solid #fff; border-right: 0; border-bottom-color: #999; background: #646464; }
.form { flex: none; display: flex; flex-direction: column; gap: 8px; padding: 19px 0 19px 11px; }
.second { padding-top: 52px; padding-bottom: 43px; }
.third { padding-top: 20px; padding-bottom: 0; }
.field { flex: none; display: flex; align-items: center; }
.tall { height: 26px; }
.low { height: 20px; }
.mini { height: 17px; }
.label { width: 94px; flex: none; padding-top: 1px; }
.state { width: 16px; height: 16px; margin: 0 12px 0 3px; color: #e5e5e5; }
.state.yellow { color: #dbdc4a; }

.btn { height: 22px; border: 1px solid #575757; border-radius: 2px; background: linear-gradient(#484848, #3d3d3d); box-shadow: 0 0 0 1px #2a2a2a; line-height: 20px; text-align: center; }
.change { width: 70px; margin-right: 8px; }
.square { width: 31px; height: 26px; display: grid; place-items: center; }
.remove { width: 60px; margin-left: 9px; }
.convert { width: 113px; }
.edit { margin-left: 9px; }
.clear { margin-left: 8px; }
.action { width: 78px; height: 24px; line-height: 22px; }

.box { display: block; height: 25px; border: 1px solid #2b2b2b; border-radius: 2px; background: #646464; }
textarea.box { height: 49px; resize: none; border-radius: 0; }
.w-xs { width: 124px; }
.w-s { width: 210px; }
.w-m { width: 235px; }
.w-l { width: 275px; }
.check { appearance: none; width: 16px; height: 16px; margin-right: 6px; border: 1px solid #2b2b2b; background: #646464; position: relative; }
.check:checked::after { content: ""; position: absolute; left: 4px; top: -1px; width: 6px; height: 12px; border: solid #e5e5e5; border-width: 0 2px 2px 0; transform: rotate(35deg); }
.far { margin-left: 65px; }
.combo { display: grid; align-items: center; width: 113px; height: 23px; border: 1px solid #505050; border-radius: 2px; background: linear-gradient(90deg, #646464 0 79%, #454545 79%); color: #ccc; }
.combo > * { grid-area: 1 / 1; }
.combo select { appearance: none; width: 100%; height: 21px; }
.combo svg { justify-self: end; margin-right: 7px; }
.spin { display: flex; width: 136px; height: 25px; margin-right: 7px; border: 1px solid #2a2a2a; border-radius: 2px; }
.spin input { flex: 1; min-width: 0; padding-right: 9px; color: #5c5c5c; text-align: right; }
.spin i { width: 17px; padding: 5px 3px; border: 1px solid #555; background: #404040; color: #555; }

.dialog { position: absolute; left: 497px; top: 365px; width: 800px; display: flex; flex-direction: column; background: #353535; box-shadow: 0 2px 14px rgba(0, 0, 0, .55); }
.dialog .titlebar { color: #000; }
.help { width: 20px; margin-right: 41px; }
.close { margin-right: 24px; }
.dialog-body { display: flex; flex-direction: column; padding: 13px 14px; }
.dialog-body h2 { line-height: 20px; }
.dialog-body .off { line-height: 18px; }
.group { border: 1px solid #424242; border-radius: 2px; padding: 0 12px 13px; }
.colors { height: 399px; display: flex; flex-direction: column; margin-bottom: 8px; }
.heads { flex: none; display: grid; grid-template-columns: 329px 1fr; align-items: center; height: 36px; padding: 5px 0 0 66px; }
.heads span { display: flex; align-items: center; gap: 8px; }
.list { flex: 1; display: flex; flex-direction: column; gap: 10px; padding: 12px 13px 13px 16px; border: 1px solid #272727; }
.color { display: grid; grid-template-columns: 26px 1fr 1fr; column-gap: 7px; align-items: center; height: 33px; }
.swatch { height: 33px; padding-left: 9px; text-align: left; border: 1px solid #000; border-right: 0; border-bottom: 0; background: #fff; color: #111; font-size: 16px; }
.accent { background: #dfe036; }
.off, .sliders { color: #5a5a5a; }
.sliders { display: grid; grid-template-columns: 72px 1fr; grid-auto-rows: 25px; align-items: center; padding: 7px 12px 10px; }
.sliders input { appearance: none; width: 100%; height: 16px; }
.sliders input::-webkit-slider-runnable-track { height: 6px; border: 1px solid #2a2a2a; background: linear-gradient(90deg, #787878 50%, #3a3a3a 50%); }
.sliders input::-webkit-slider-thumb { appearance: none; width: 15px; height: 15px; margin-top: -7px; border: 1px solid #626262; border-radius: 2px; background: linear-gradient(#505050, #434343); }
.actions { display: flex; justify-content: flex-end; gap: 8px; padding-top: 7px; }
.primary { width: 80px; border-color: #6f96cf; background: linear-gradient(#555a65, #474c57); }

.cursor { position: absolute; left: 298px; top: 708px; width: 13px; height: 20px; }
```
